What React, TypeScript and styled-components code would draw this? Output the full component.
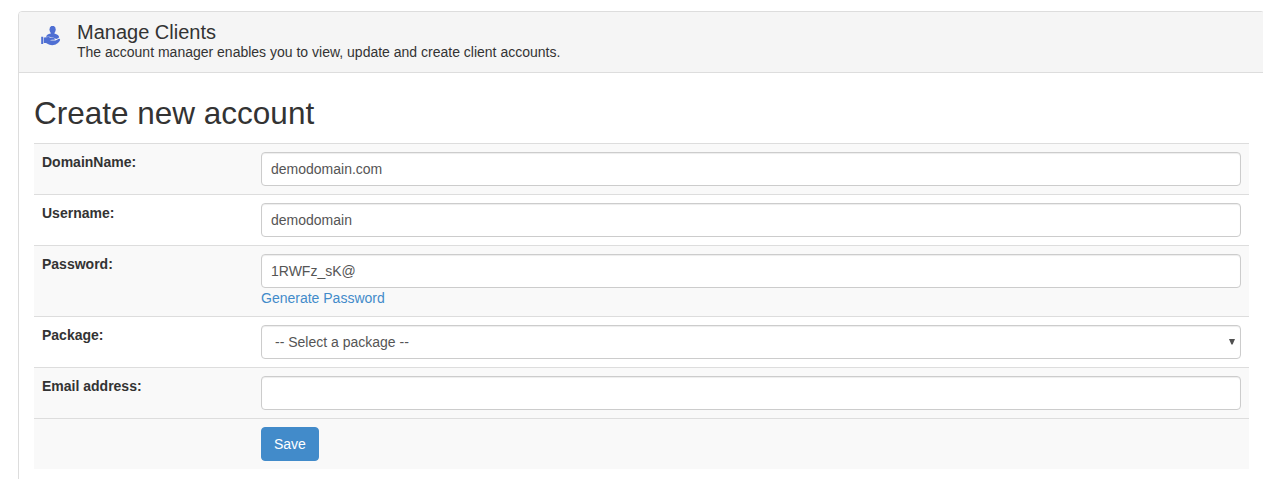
import React from "react";
import styled, { createGlobalStyle } from "styled-components";

const GlobalStyle = createGlobalStyle`
  *, *::before, *::after { box-sizing: border-box; }
  body {
    margin: 0;
    background: #fff;
    color: #333;
    font: 14px/20px "Liberation Sans", Arial, sans-serif;
  }
`;

const Page = styled.main`
  height: 479px;
  padding: 11px 0 0 18px;
  overflow: hidden;
`;

const Panel = styled.section`
  width: 1247px;
  min-height: 520px;
  border: 1px solid #ddd;
  border-radius: 4px;
`;

const PanelHeader = styled.header`
  display: flex;
  padding: 10px 15px;
  background: #f5f5f5;
  border-bottom: 1px solid #ddd;
  border-radius: 3px 3px 0 0;
`;

const HeaderIcon = styled.svg`
  flex: none;
  width: 20px;
  height: 20px;
  margin: 4px 16px 0 7px;
  fill: #4f6fd3;
`;

const Title = styled.h1`
  margin: 0;
  font-size: 20px;
  font-weight: 400;
  line-height: 20px;
`;

const Description = styled.p`
  margin: 0;
`;

const PanelBody = styled.div`
  padding: 22px 15px 15px;
`;

const FormTitle = styled.h2`
  margin: 0 0 12px;
  font-size: 31.5px;
  font-weight: 400;
  line-height: 36px;
`;

const Row = styled.div<{ $shaded?: boolean }>`
  display: grid;
  grid-template-columns: 219px 1fr;
  padding: 8px;
  border-top: 1px solid #ddd;
  background: ${(p) => (p.$shaded ? "#f9f9f9" : "#fff")};
`;

const Label = styled.label`
  font-weight: 700;
`;

const Control = styled.input`
  display: block;
  width: 100%;
  height: 34px;
  padding: 6px 9px;
  color: #555;
  font: inherit;
  background: #fff;
  border: 1px solid #ccc;
  border-radius: 4px;
  box-shadow: inset 0 1px 1px rgba(0, 0, 0, 0.075);
  outline: none;
`;

const SelectWrap = styled.div`
  position: relative;
`;

const SelectControl = styled(Control).attrs({ as: "select" })`
  appearance: none;
  padding-left: 13px;
`;

const Arrow = styled.svg`
  position: absolute;
  top: 14px;
  right: 6px;
  width: 6px;
  height: 6px;
  fill: #505050;
  pointer-events: none;
`;

const Link = styled.a`
  color: #428bca;
  text-decoration: none;
`;

const Button = styled.button`
  display: block;
  height: 34px;
  padding: 6px 12px;
  color: #fff;
  font: inherit;
  background: #428bca;
  border: 1px solid #428bca;
  border-radius: 4px;
`;

export default function App() {
  return (
    <Page>
      <GlobalStyle />
      <Panel>
        <PanelHeader>
          <HeaderIcon viewBox="0 0 20 20" aria-hidden="true">
            <ellipse cx="11.6" cy="3.5" rx="3.1" ry="3.7" />
            <path d="M9.8 6H13.4V7.6C16.4 8.4 18 9.5 18.1 11.2 17.7 12.1 16.6 12.7 14.9 13 14.3 11.7 11.2 11.7 9.4 11 8.3 10.6 7.1 10.6 5.2 11 5.2 9.4 6.8 8.3 9.8 7.6Z" />
            <path d="M0.2 10.7H2.2V18H0.2ZM2.8 11.5C4.5 11.7 6.5 10.8 8.2 11.2 10.1 12 13.8 11.6 14.2 13.1 14.2 13.9 12.2 13.9 9.2 13.9V14.3C12.4 14.8 14.6 14.6 16.1 13.7 17.4 12.6 18.9 12.4 19.1 13.5 19.1 15.2 16.5 18 13.7 18.8 10.8 19.6 8.2 18.9 6.4 17.7 5.2 17 4.1 17.1 2.8 17.1Z" />
          </HeaderIcon>
          <div>
            <Title>Manage Clients</Title>
            <Description>
              The account manager enables you to view, update and create client accounts.
            </Description>
          </div>
        </PanelHeader>
        <PanelBody>
          <FormTitle>Create new account</FormTitle>
          <form onSubmit={(e) => e.preventDefault()}>
            <Row $shaded>
              <Label htmlFor="domain">DomainName:</Label>
              <Control id="domain" defaultValue="demodomain.com" spellCheck={false} />
            </Row>
            <Row>
              <Label htmlFor="username">Username:</Label>
              <Control id="username" defaultValue="demodomain" spellCheck={false} />
            </Row>
            <Row $shaded>
              <Label htmlFor="password">Password:</Label>
              <div>
                <Control id="password" defaultValue="1RWFz_sK@" spellCheck={false} />
                <Link href="#">Generate Password</Link>
              </div>
            </Row>
            <Row>
              <Label htmlFor="package">Package:</Label>
              <SelectWrap>
                <SelectControl id="package">
                  <option>-- Select a package --</option>
                </SelectControl>
                <Arrow viewBox="0 0 6 6" aria-hidden="true">
                  <path d="M0 0H6L3.6 5.4H2.4Z" />
                </Arrow>
              </SelectWrap>
            </Row>
            <Row $shaded>
              <Label htmlFor="email">Email address:</Label>
              <Control id="email" type="email" />
            </Row>
            <Row $shaded>
              <span />
              <div>
                <Button type="submit">Save</Button>
              </div>
            </Row>
          </form>
        </PanelBody>
      </Panel>
    </Page>
  );
}
